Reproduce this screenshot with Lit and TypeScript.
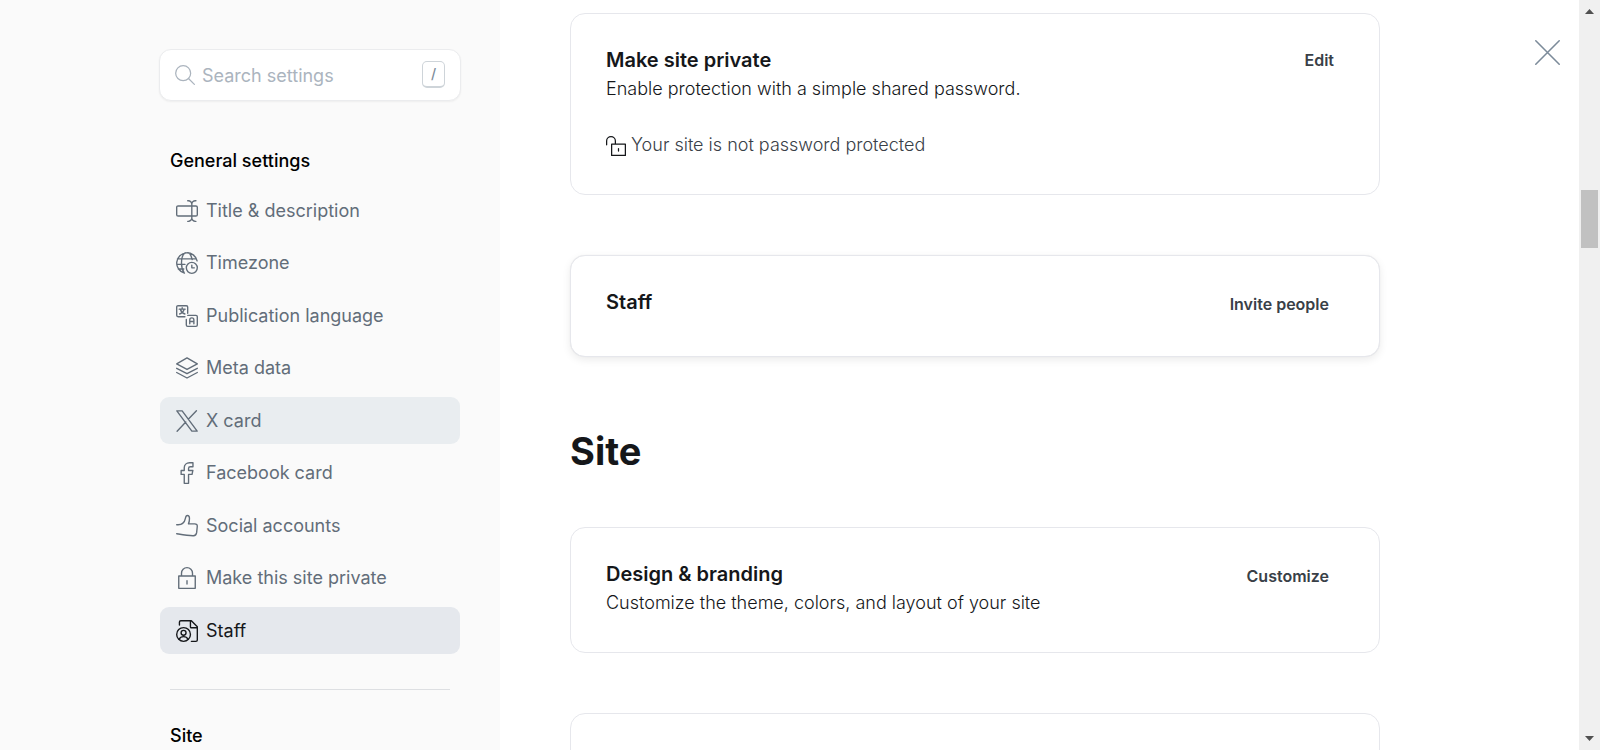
import { LitElement, html, css, svg, nothing, type SVGTemplateResult } from "lit";
import { customElement, property, state } from "lit/decorators.js";
import { classMap } from "lit/directives/class-map.js";

// Outline icons on a 24 x 24 grid, stroked with the current text colour.
const icons: Record<string, SVGTemplateResult> = {
  search: svg`<circle cx="9.8" cy="9.8" r="9"/><path d="M16.2 16.2 23.25 23.25"/>`,
  title: svg`<path d="M14.5 17.5H2.25A1.5 1.5 0 0 1 .75 16V8a1.5 1.5 0 0 1 1.5-1.5H14.5M20 6.5h1.75A1.5 1.5 0 0 1 23.25 8v8a1.5 1.5 0 0 1-1.5 1.5H20M13.5 6.5h8M13.5 17.5h8M17.25 4v16M12.75.75h.75a3.75 3.75 0 0 1 3.75 3.75A3.75 3.75 0 0 1 21 .75h.75M12.75 23.25h.75a3.75 3.75 0 0 0 3.75-3.75A3.75 3.75 0 0 0 21 23.25h.75"/>`,
  timezone: svg`<circle cx="17.25" cy="17.25" r="6"/><path d="M17.25 14.25v3h2.75M9.2 23a11.25 11.25 0 1 1 13.8-13.4M8.7 22.3C6.9 19.8 6 16 6 12c0-5 1.5-9.500 4-11.200M14 .9c1.900 1.700 3.100 4.300 3.700 7.300M1.600 7.500h20.500M.8 13.500h9M2.500 18.500h6"/>`,
  language: svg`<path d="M8.250 12.750h-6A1.500 1.500 0 0 1 .75 11.250v-9A1.500 1.500 0 0 1 2.250.75h9a1.500 1.500 0 0 1 1.500 1.500v6M12.750 11.250h9a1.500 1.500 0 0 1 1.500 1.500v9a1.500 1.500 0 0 1-1.500 1.500h-9a1.500 1.500 0 0 1-1.500-1.500v-6M8.250 12.750h1.500M12.750 8.250v.8M3.500 4.500h6.500M6.750 3v1.500M9 4.500c-.6 2.500-2.600 4.500-5 5.300M4.700 4.600c.7 2.500 2.600 4.400 5 5.200M15 20.500v-4.200a2.250 2.250 0 0 1 4.500 0v4.200M15 18h4.500"/>`,
  layers: svg`<path d="M12 1 23.250 7.600 12 13.600.75 7.600zM.75 12.300 12 18.200l11.250-5.900M.75 16.900 12 22.900l11.250-6"/>`,
  x: svg`<path d="M.9.9h5.800l16.400 22.200h-5.800zM22.300.9 13.400 10.200M1.200 23.100l9.500-9.900"/>`,
  facebook: svg`<path d="M9 23.250h4.700v-9.700h3.800l.9-4.300h-4.700V7.100c0-1.200.8-1.900 1.900-1.900h2.900V.75h-3.700C11.400.75 9 3.200 9 6.300v2.950H5.600v4.300H9z"/>`,
  thumb: svg`<path d="M.75 10.600h1.500c4.200 0 7.100-2.300 8-6.900.3-1.700.7-3.100 2.200-3.100 1.400 0 2.250 1.300 2.250 3.200 0 2.400-.4 4.300-1.100 5.900h6.800c1.900 0 2.950 1.100 2.800 2.800l-.7 6.800c-.3 2.300-1.900 3.500-4 3.300-6-.4-11-1.200-17.750-2.200"/>`,
  lock: svg`<path d="M3 9.750h18v13.500H3zM6 9.750V6.700a6 6 0 0 1 12 0v3.050M12 15v3.500"/>`,
  unlock: svg`<path d="M6.750 9.750h16.500v13.500H6.750zM.75 10.500V6a5.250 5.250 0 0 1 10.500 0v3.750M15 15v3"/>`,
  staff: svg`<circle cx="8.250" cy="15.750" r="7.500"/><circle cx="8.250" cy="14" r="2.700"/><path d="M3.300 21.100c1-2 2.800-3 4.950-3s3.950 1 4.950 3M3.750 5.500V2.250a1.500 1.500 0 0 1 1.500-1.500h11.500l6.500 6.700v14.300a1.500 1.500 0 0 1-1.500 1.500h-5M15.750.75v6.750a1 1 0 0 0 1 1h6.500"/>`,
  close: svg`<path d="M.75.75l22.500 22.500M23.250.75l-22.500 22.500"/>`,
};

@customElement("line-icon")
class LineIcon extends LitElement {
  static styles = css`
    :host { display: inline-flex; flex: none; }
    .glyph {
      width: 100%;
      height: 100%;
      fill: none;
      stroke: currentColor;
      stroke-width: 1.5;
      stroke-linecap: round;
      stroke-linejoin: round;
      overflow: visible;
    }
  `;

  @property() name = "";

  render() {
    return html`<svg class="glyph" viewBox="0 0 24 24" aria-hidden="true">${icons[this.name]}</svg>`;
  }
}

@customElement("setting-card")
class SettingCard extends LitElement {
  static styles = css`
    :host { display: block; }
    .card {
      padding: 32px 35px 35px;
      border: 1px solid #e6e7ec;
      border-radius: 15px;
      background: #fff;
    }
    .raised { box-shadow: 0 0 1px rgba(0, 0, 0, 0.08), 0 3px 9px rgba(0, 0, 0, 0.08); }
    .head { display: flex; justify-content: space-between; align-items: flex-start; gap: 24px; }
    .title { margin: 0; font-size: 20px; line-height: 28px; font-weight: 600; color: #15171a; }
    .text { margin: 0; font-size: 18px; line-height: 29px; font-weight: 300; color: #15171a; }
    .action {
      flex: none;
      height: 33px;
      padding: 0 15px 2px;
      border: 0;
      border-radius: 4px;
      background: none;
      font: 600 16px/24px Inter, sans-serif;
      color: #394047;
      cursor: pointer;
    }
    .compact { height: 28px; padding: 0 10px; }
  `;

  @property() heading = "";
  @property() text = "";
  @property() action = "";
  @property({ type: Boolean }) raised = false;
  @property({ type: Boolean }) compact = false;

  private renderHead() {
    return html`
      <div class="head">
        <div>
          <h3 class="title">${this.heading}</h3>
          ${this.text ? html`<p class="text">${this.text}</p>` : nothing}
        </div>
        <button type="button" class=${classMap({ action: true, compact: this.compact })}>${this.action}</button>
      </div>
    `;
  }

  render() {
    return html`
      <section class=${classMap({ card: true, raised: this.raised })}>
        ${this.heading ? this.renderHead() : nothing}
        <slot></slot>
      </section>
    `;
  }
}

const links = [
  { icon: "title", label: "Title & description" },
  { icon: "timezone", label: "Timezone" },
  { icon: "language", label: "Publication language" },
  { icon: "layers", label: "Meta data" },
  { icon: "x", label: "X card", hovered: true },
  { icon: "facebook", label: "Facebook card" },
  { icon: "thumb", label: "Social accounts" },
  { icon: "lock", label: "Make this site private" },
  { icon: "staff", label: "Staff" },
];

@customElement("app-root")
class AppRoot extends LitElement {
  static styles = css`
    :host {
      display: flex;
      height: 100vh;
      overflow: hidden;
      background: #fff;
      font-family: Inter, sans-serif;
      color: #15171a;
    }
    .sidebar {
      box-sizing: border-box;
      flex: none;
      width: 500px;
      padding: 49px 39px 0 159px;
      background: #fafafa;
    }
    .search {
      box-sizing: border-box;
      display: flex;
      align-items: center;
      gap: 7px;
      height: 52px;
      padding: 0 15px;
      border: 1px solid #ebecee;
      border-radius: 12px;
      background: #fff;
      box-shadow: 0 1px 2px rgba(0, 0, 0, 0.05);
      color: #abb4be;
    }
    .search-icon { width: 20px; height: 20px; }
    .search-input {
      flex: 1;
      min-width: 0;
      padding: 2px 0 0;
      border: 0;
      outline: 0;
      background: none;
      font: 400 18px/24px Inter, sans-serif;
      color: #15171a;
    }
    .search-input::placeholder { color: #abb4be; opacity: 1; }
    .key {
      box-sizing: border-box;
      width: 23px;
      height: 27px;
      margin-bottom: 2px;
      border: 1px solid #ced4d9;
      border-bottom-width: 2px;
      border-radius: 5px;
      font: 500 14px/23px Inter, sans-serif;
      text-align: center;
      color: #7c8b9a;
    }
    .group { margin: 0 11px; font-size: 18px; line-height: 24px; font-weight: 500; color: #000; }
    .group-first { margin-top: 48px; margin-bottom: 14px; }
    .links {
      display: grid;
      align-content: space-between;
      min-height: 467px;
      margin: 0 1px;
      padding: 0;
      list-style: none;
    }
    .link {
      display: flex;
      align-items: center;
      gap: 8px;
      height: 47px;
      padding: 0 16px;
      border-radius: 9px;
      font-size: 18px;
      line-height: 24px;
      color: #626d79;
      text-decoration: none;
    }
    .link-icon { width: 22px; height: 22px; }
    .hovered { background: #e9edf0; }
    .current { background: #e5e8ed; color: #15171a; }
    .rule { height: 1px; margin: 35px 11px 34px; border: 0; background: #dddfe2; }
    .main { flex: 1; display: flex; gap: 155px; min-width: 0; padding: 0 19px 0 70px; }
    .content { flex: 1; min-width: 0; padding-top: 13px; }
    .stack { display: grid; gap: 60px; }
    .section { margin: 70px 0 52px; font-size: 38px; line-height: 48px; font-weight: 700; }
    .status { display: flex; align-items: center; gap: 5px; margin-top: 28px; font-size: 18px; line-height: 28px; font-weight: 300; color: #394047; }
    .status-icon { width: 20px; height: 20px; padding-top: 2px; color: #15171a; }
    .close { flex: none; align-self: flex-start; margin-top: 40px; padding: 0; border: 0; background: none; color: #7c8b9a; cursor: pointer; }
    .close-icon { display: flex; width: 25px; height: 25px; }
    .scrollbar {
      flex: none;
      display: flex;
      flex-direction: column;
      width: 21px;
      background: #f0f0f0;
    }
    .arrow { display: flex; justify-content: center; height: 23px; padding: 9px 0 0; border: 0; background: none; }
    .arrow-shape { width: 9px; height: 5px; fill: #505050; }
    .track { flex: 1; padding: 167px 2px 0; }
    .thumb { height: 58px; background: #c1c1c1; }
  `;

  @state() private current = "Staff";

  private select(event: Event, label: string) {
    event.preventDefault();
    this.current = label;
  }

  render() {
    return html`
      <aside class="sidebar">
        <label class="search">
          <line-icon class="search-icon" name="search"></line-icon>
          <input class="search-input" type="text" placeholder="Search settings" aria-label="Search settings" />
          <kbd class="key">/</kbd>
        </label>
        <h2 class="group group-first">General settings</h2>
        <ul class="links">
          ${links.map(
            (link) => html`
              <li>
                <a
                  href="#"
                  class=${classMap({ link: true, hovered: !!link.hovered, current: link.label === this.current })}
                  @click=${(event: Event) => this.select(event, link.label)}
                ><line-icon class="link-icon" name=${link.icon}></line-icon><span>${link.label}</span></a>
              </li>
            `
          )}
        </ul>
        <hr class="rule" />
        <h2 class="group">Site</h2>
      </aside>
      <main class="main">
        <div class="content">
          <div class="stack">
            <setting-card heading="Make site private" text="Enable protection with a simple shared password." action="Edit" compact>
              <div class="status">
                <line-icon class="status-icon" name="unlock"></line-icon>
                <span>Your site is not password protected</span>
              </div>
            </setting-card>
            <setting-card heading="Staff" action="Invite people" raised></setting-card>
          </div>
          <h2 class="section">Site</h2>
          <div class="stack">
            <setting-card heading="Design & branding" text="Customize the theme, colors, and layout of your site" action="Customize"></setting-card>
            <setting-card></setting-card>
          </div>
        </div>
        <button type="button" class="close" aria-label="Close">
          <line-icon class="close-icon" name="close"></line-icon>
        </button>
      </main>
      <div class="scrollbar">
        <button type="button" class="arrow" aria-label="Scroll up">
          <svg class="arrow-shape" viewBox="0 0 9 5"><path d="M4.500 0 9 5H0z" /></svg>
        </button>
        <div class="track"><div class="thumb"></div></div>
        <button type="button" class="arrow" aria-label="Scroll down">
          <svg class="arrow-shape" viewBox="0 0 9 5"><path d="M0 0h9L4.500 5z" /></svg>
        </button>
      </div>
    `;
  }
}
